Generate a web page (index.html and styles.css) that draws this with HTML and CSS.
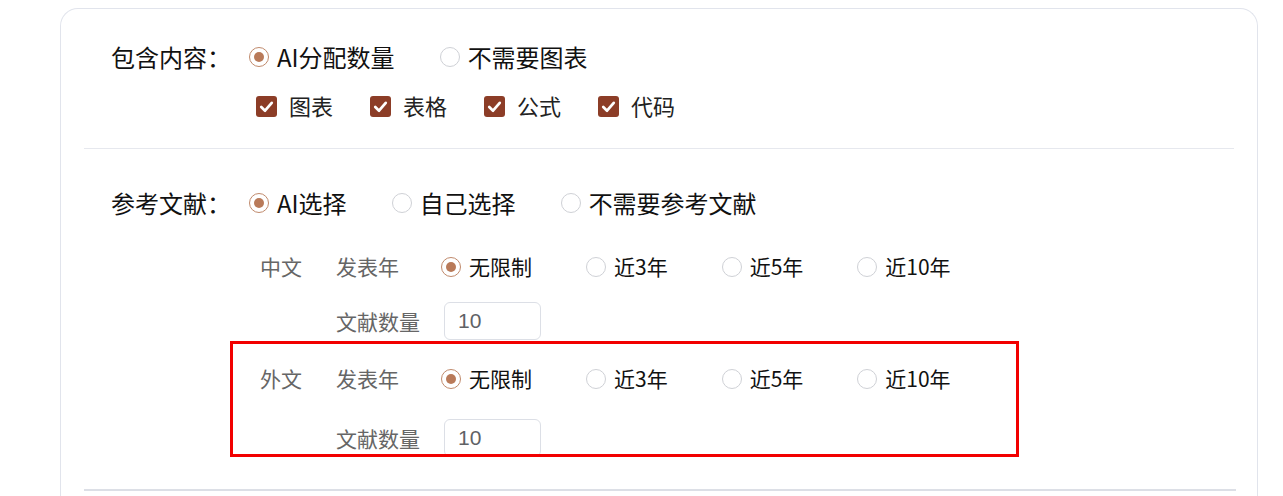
FILE: index.html
```html
<!DOCTYPE html>
<html lang="zh-CN">
<head>
  <meta charset="UTF-8" />
  <title>论文设置</title>
  <link rel="stylesheet" href="styles.css">
</head>
<body>

  <div class="card">

    <!-- 包含内容 -->
    <div class="block">
      <div class="row">
        <span class="row-label">包含内容：</span>
        <label class="radio checked"><span class="dot"></span>AI分配数量</label>
        <label class="radio"><span class="dot"></span>不需要图表</label>
      </div>
      <div class="row checks">
        <label class="check"><span class="box"><svg viewBox="0 0 20 20"><polyline points="5,10.5 8.6,14 15,6.5" /></svg></span>图表</label>
        <label class="check"><span class="box"><svg viewBox="0 0 20 20"><polyline points="5,10.5 8.6,14 15,6.5" /></svg></span>表格</label>
        <label class="check"><span class="box"><svg viewBox="0 0 20 20"><polyline points="5,10.5 8.6,14 15,6.5" /></svg></span>公式</label>
        <label class="check"><span class="box"><svg viewBox="0 0 20 20"><polyline points="5,10.5 8.6,14 15,6.5" /></svg></span>代码</label>
      </div>
    </div>

    <hr class="divider" />

    <!-- 参考文献 -->
    <div class="block refs">
      <div class="row">
        <span class="row-label">参考文献：</span>
        <label class="radio checked"><span class="dot"></span>AI选择</label>
        <label class="radio"><span class="dot"></span>自己选择</label>
        <label class="radio"><span class="dot"></span>不需要参考文献</label>
      </div>

      <div class="lang-group">
        <div class="sub-row">
          <span class="lang">中文</span>
          <span class="field">发表年</span>
          <label class="radio small checked"><span class="dot"></span>无限制</label>
          <label class="radio small"><span class="dot"></span>近3年</label>
          <label class="radio small"><span class="dot"></span>近5年</label>
          <label class="radio small"><span class="dot"></span>近10年</label>
        </div>
        <div class="sub-row count">
          <span class="lang"></span>
          <span class="field">文献数量</span>
          <input class="num" type="text" value="10" />
        </div>
      </div>

      <div class="lang-group marked">
        <div class="mark"></div>
        <div class="sub-row">
          <span class="lang">外文</span>
          <span class="field">发表年</span>
          <label class="radio small checked"><span class="dot"></span>无限制</label>
          <label class="radio small"><span class="dot"></span>近3年</label>
          <label class="radio small"><span class="dot"></span>近5年</label>
          <label class="radio small"><span class="dot"></span>近10年</label>
        </div>
        <div class="sub-row count">
          <span class="lang"></span>
          <span class="field">文献数量</span>
          <input class="num" type="text" value="10" />
        </div>
      </div>
    </div>

    <hr class="divider bottom" />

  </div>

</body>
</html>
```

FILE: styles.css
```css
/* Algemeen */
html, body {
  margin: 0;
  padding: 0;
  background: #fff;
  font-family: "Noto Sans CJK SC", "Noto Sans", sans-serif;
  color: #111;
  overflow: hidden;
}
/* Kaart */
.card {
  margin: 8px 0 0 60px;
  width: 1198px;
  min-height: 600px;
  box-sizing: border-box;
  border: 1px solid #e1e4ec;
  border-bottom: none;
  border-radius: 18px 18px 0 0;
  padding: 0 23px;
  background: #fff;
}
.block {
  padding-left: 27px;
}
.block:first-child {
  padding-top: 29px;
}
.row {
  display: flex;
  align-items: center;
  height: 36px;
  font-size: 24px;
}
.row-label {
  width: 138px;
  color: #111;
}
/* Radio */
.radio {
  display: inline-flex;
  align-items: center;
  margin-right: 45px;
  cursor: pointer;
  white-space: nowrap;
}
.radio .dot {
  width: 20px;
  height: 20px;
  box-sizing: border-box;
  border: 1px solid #cfd1d6;
  border-radius: 50%;
  margin-right: 8px;
  margin-top: 2px;
  display: flex;
  align-items: center;
  justify-content: center;
}
.radio.checked .dot {
  border-color: #c08a6c;
}
.radio.checked .dot::after {
  content: "";
  width: 10px;
  height: 10px;
  border-radius: 50%;
  background: #b97a59;
}
.radio.small {
  font-size: 21px;
  margin-right: 54px;
  color: #111;
}
.radio.small .dot {
  margin-top: 1px;
}
/* Checkbox */
.checks {
  margin-top: 13px;
  padding-left: 145px;
  font-size: 22px;
}
.check {
  display: inline-flex;
  align-items: center;
  margin-right: 37px;
  color: #222;
}
.check .box {
  width: 21px;
  height: 21px;
  border-radius: 3px;
  background: #8c3d27;
  margin-right: 12px;
  margin-top: 2px;
  display: flex;
}
.check svg {
  width: 21px;
  height: 21px;
  fill: none;
  stroke: #fff;
  stroke-width: 2.6;
  stroke-linecap: round;
  stroke-linejoin: round;
}
/* Scheidingslijn */
.divider {
  border: none;
  height: 1px;
  background: #e6e8ee;
  margin: 25px 0 0 0;
}
.divider.bottom {
  height: 2px;
  background: #dcdfe6;
  margin-top: 32px;
  width: 1152px;
}
.refs {
  padding-top: 35px;
}
/* Sub rijen */
.lang-group {
  margin-left: 149px;
  position: relative;
}
.refs .row + .lang-group {
  margin-top: 28px;
}
.lang-group.marked {
  margin-top: 20px;
}
.sub-row {
  display: flex;
  align-items: center;
  height: 36px;
  font-size: 21px;
}
.sub-row.count {
  height: 38px;
  margin-top: 18px;
}
.marked .sub-row.count {
  margin-top: 23px;
}
.lang {
  width: 76px;
  color: #666;
}
.field {
  width: 105px;
  color: #666;
}
.num {
  margin-left: 3px;
  width: 97px;
  height: 38px;
  box-sizing: border-box;
  border: 1px solid #dcdfe6;
  border-radius: 6px;
  padding: 0 0 0 13px;
  font: 21px "Liberation Sans", "Noto Sans", sans-serif;
  color: #606266;
  outline: none;
}
/* Rode markering */
.mark {
  position: absolute;
  left: -30px;
  top: -19px;
  width: 789px;
  height: 116px;
  box-sizing: border-box;
  border: 3px solid #f20000;
  z-index: 2;
  pointer-events: none;
}
```
